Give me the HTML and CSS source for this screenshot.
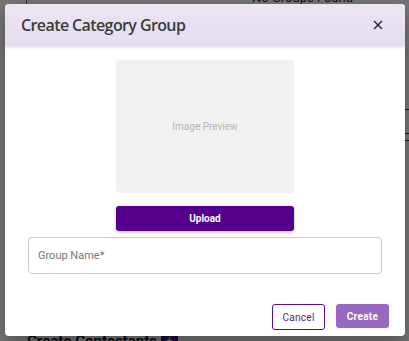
FILE: index.html
```html
<!DOCTYPE html>
<html lang="en">
<head>
    <meta charset="UTF-8">
    <meta name="viewport" content="width=device-width, initial-scale=1.0">
    <title>Create Category Group</title>
    <link rel="stylesheet" href="styles.css">
</head>
<body>
    <!-- Page behind the dialog -->
    <div class="page">
        <div class="page-top">
            <div class="side-line"></div>
            <div class="empty-note">No Groups Found</div>
        </div>
        <div class="page-rules">
            <div class="rule"></div>
            <div class="rule rule-2"></div>
            <div class="rule rule-3"></div>
        </div>
        <div class="page-bottom">
            <span class="section-title">Create Contestants</span>
            <span class="add-badge">+</span>
        </div>
    </div>

    <!-- Backdrop -->
    <div class="backdrop"></div>

    <!-- Dialog -->
    <div class="dialog">
        <div class="dialog-header">
            <h2 class="dialog-title">Create Category Group</h2>
            <button class="close-btn" aria-label="Close">
                <svg width="10" height="10" viewBox="0 0 10 10">
                    <path d="M1 1 L9 9 M9 1 L1 9" stroke="#222" stroke-width="1.4"/>
                </svg>
            </button>
        </div>

        <div class="dialog-body">
            <div class="preview">Image Preview</div>
            <button class="btn-upload">Upload</button>
            <input type="text" class="field" placeholder="Group Name*">
        </div>

        <div class="dialog-actions">
            <button class="btn btn-outline">Cancel</button>
            <button class="btn btn-primary">Create</button>
        </div>
    </div>
</body>
</html>
```

FILE: styles.css
```css
/* Reset */
* {
    margin: 0;
    padding: 0;
    box-sizing: border-box;
}

body {
    width: 409px;
    height: 341px;
    overflow: hidden;
    font-family: Roboto, 'Noto Sans', sans-serif;
    background: #fff;
    position: relative;
}

/* Page content behind the overlay */
.page {
    height: 100%;
    display: flex;
    flex-direction: column;
}

.page-top {
    display: flex;
    height: 10px;
}

.side-line {
    width: 1px;
    height: 10px;
    margin-left: 26px;
    background: #555;
}

.empty-note {
    margin-left: 225px;
    margin-top: -9px;
    font-size: 13px;
    line-height: 13px;
    color: #333;
}

.page-rules {
    display: flex;
    flex-direction: column;
    margin: 99px 0 0 395px;
}

.rule {
    height: 1px;
    background: #333;
}

.rule-2 { margin-top: 23px; }
.rule-3 { margin-top: 6px; }

.page-bottom {
    display: flex;
    align-items: center;
    gap: 4px;
    margin-top: auto;
    margin-bottom: -9px;
    padding-left: 27px;
}

.section-title {
    font-size: 15px;
    font-weight: 700;
    color: #1a1a2e;
}

.add-badge {
    background: #3d1a7a;
    color: #fff;
    font-size: 12px;
    padding: 0 5px;
    border-radius: 2px;
}

/* Overlay */
.backdrop {
    position: absolute;
    inset: 0;
    background: rgba(0, 0, 0, 0.54);
}

/* Dialog */
.dialog {
    position: absolute;
    left: 5px;
    top: 4px;
    width: 400px;
    height: 332px;
    background: #fff;
    border-radius: 4px;
    overflow: hidden;
    display: flex;
    flex-direction: column;
    box-shadow: 0 8px 20px rgba(0, 0, 0, 0.3);
}

.dialog-header {
    height: 42px;
    display: flex;
    align-items: center;
    justify-content: space-between;
    padding: 0 22px 0 16px;
    background: linear-gradient(#ede5f4, #e5dcef);
    box-shadow: 0 1px 3px rgba(80, 50, 110, 0.18);
}

.dialog-title {
    font-family: 'Open Sans', sans-serif;
    font-size: 16px;
    font-weight: 600;
    color: #3c3c3c;
    letter-spacing: -0.6px;
}

.close-btn {
    background: none;
    border: none;
    display: flex;
    cursor: pointer;
}

.dialog-body {
    display: flex;
    flex-direction: column;
    align-items: center;
    padding: 14px 23px 0;
}

.preview {
    width: 178px;
    height: 133px;
    background: #f1f1f1;
    border-radius: 4px;
    display: flex;
    align-items: center;
    justify-content: center;
    font-size: 10px;
    color: #b5b5b5;
}

.btn-upload {
    width: 178px;
    height: 25px;
    margin-top: 13px;
    background: #55008c;
    color: #fff;
    border: none;
    border-radius: 3px;
    font-family: Roboto, sans-serif;
    font-size: 10px;
    font-weight: 700;
    box-shadow: 0 1px 3px rgba(0, 0, 0, 0.3);
}

.field {
    width: 354px;
    height: 37px;
    margin-top: 6px;
    padding: 0 9px;
    border: 1px solid #c8c8c8;
    border-radius: 4px;
    font-family: Roboto, sans-serif;
    font-size: 11px;
    color: #333;
}

.field::placeholder {
    color: #777;
}

/* Actions */
.dialog-actions {
    display: flex;
    justify-content: flex-end;
    gap: 11px;
    padding: 30px 16px 0;
}

.btn {
    width: 53px;
    font-family: Roboto, sans-serif;
    font-size: 10px;
    letter-spacing: 0.3px;
    border-radius: 3px;
    cursor: pointer;
}

.btn-outline {
    height: 26px;
    background: #fff;
    color: #5a1a9a;
    border: 1.5px solid #5a0a9a;
}

.btn-primary {
    height: 24px;
    background: #9a68c0;
    color: #fff;
    border: none;
    font-weight: 700;
}
```
